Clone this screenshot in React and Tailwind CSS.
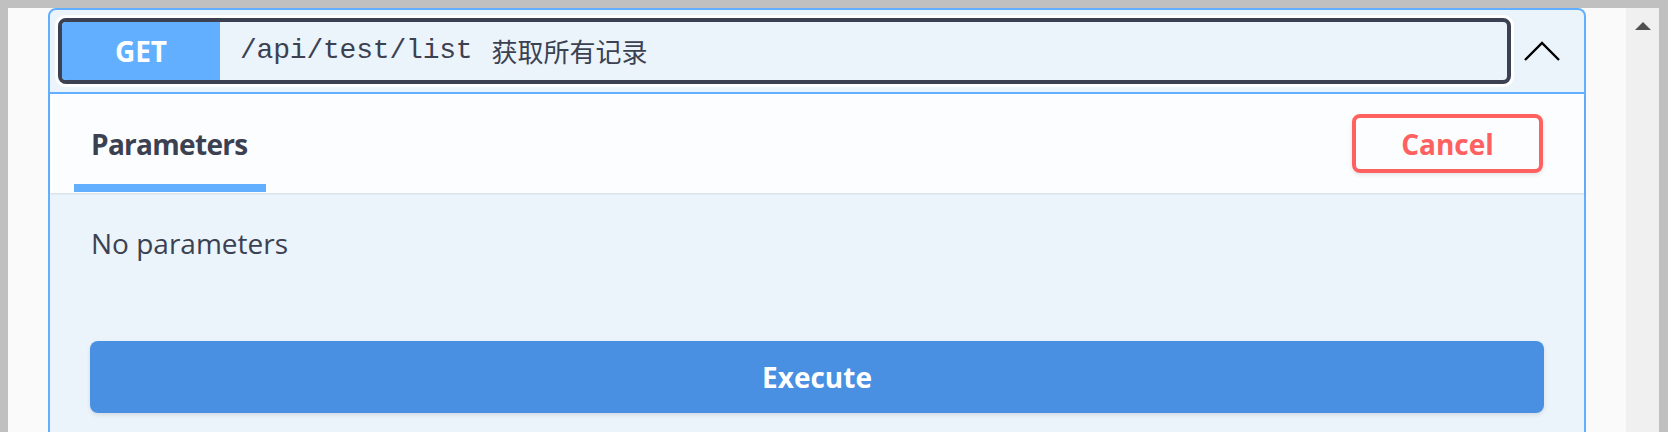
export default function App() {
  return (
    <div className="h-[432px] w-full overflow-hidden bg-[#c0c0c0] pt-[8px] pl-[8px] pr-[9px]">
      <div className="flex h-full">
        <div className="flex-1 bg-[#fafafa] px-[40px]">
          <OpBlock />
        </div>
        <div className="w-[33px] bg-[#f0f0f0] pt-[14px] flex justify-center">
          <svg width="16" height="8" viewBox="0 0 16 8" className="ml-[1px]">
            <path d="M8 0 L16 8 L0 8 Z" fill="#505050" />
          </svg>
        </div>
      </div>
    </div>
  )
}

function OpBlock() {
  return (
    <div className="rounded-[8px] border-2 border-[#61affe] bg-[#ebf3fb] text-[#3b4151] font-['Open_Sans',sans-serif]">
      {/* summary */}
      <div className="flex items-center border-b-2 border-[#61affe] py-[8px] pl-[8px]">
        <div className="flex h-[66px] flex-1 items-stretch overflow-hidden rounded-[8px] border-4 border-[#3b4151] shadow-[0_0_0_3px_#ffffff]">
          <div className="flex w-[158px] items-center justify-center bg-[#61affe] text-[28px] font-bold text-white">
            GET
          </div>
          <div className="flex items-center">
            <span className="ml-[20px] font-['Liberation_Mono',monospace] text-[28px] leading-none tracking-[-0.2px]">
              /api/test/list
            </span>
            <span className="ml-[19px] font-['Noto_Sans_CJK_SC',sans-serif] text-[26px] leading-none">
              获取所有记录
            </span>
          </div>
        </div>
        <div className="ml-[11px] mr-[22px] h-[40px] w-[40px]">
          <svg width="40" height="40" viewBox="0 0 40 40">
            <polyline points="3,29 20,12 37,29" fill="none" stroke="#000" strokeWidth="2.4" />
          </svg>
        </div>
      </div>

      {/* section header */}
      <div className="flex h-[99px] items-center justify-between bg-white/80 pl-[24px] pr-[41px] shadow-[0_1px_2px_rgba(0,0,0,0.1)]">
        <div className="flex h-full w-[192px] flex-col pt-[31px]">
          <div className="px-[17px] text-[28px] font-bold leading-[38px] tracking-[-0.7px] whitespace-nowrap">Parameters</div>
          <div className="mt-[21px] h-[8px] bg-[#61affe]" />
        </div>
        <button className="flex h-[59px] w-[191px] items-center justify-center rounded-[8px] border-4 border-[#ff6060] text-[28px] font-bold text-[#ff6060] shadow-[0_2px_4px_rgba(0,0,0,0.1)]">
          Cancel
        </button>
      </div>

      {/* body */}
      <div className="px-[40px] pt-[31px] pb-[40px]">
        <div className="pl-[1px] text-[28px] leading-[38px]">No parameters</div>
        <button className="mt-[79px] flex h-[72px] w-full items-center justify-center rounded-[8px] bg-[#4990e2] text-[28px] font-bold text-white shadow-[0_2px_4px_rgba(0,0,0,0.1)]">
          Execute
        </button>
      </div>
    </div>
  )
}
